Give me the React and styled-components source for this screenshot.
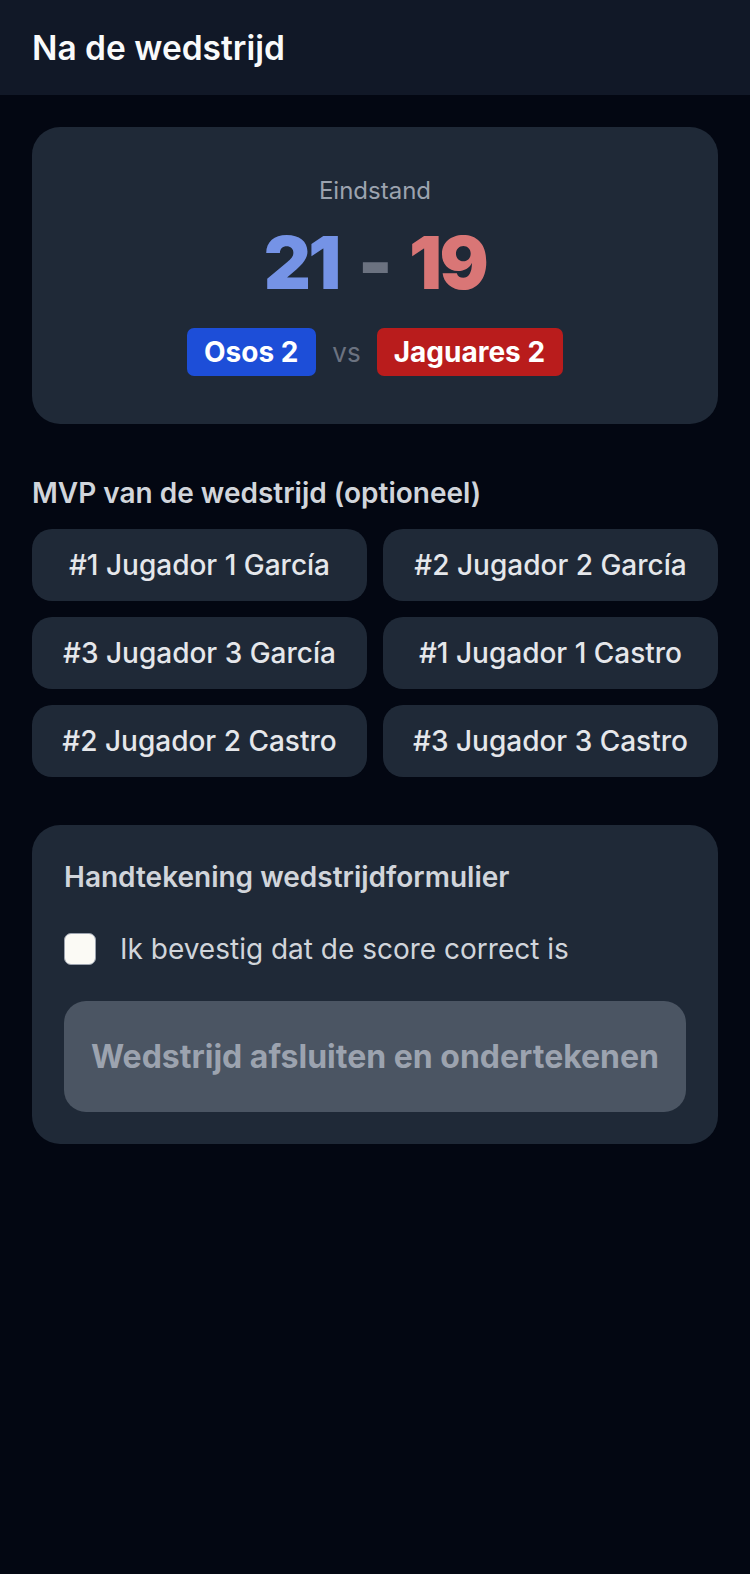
import styled, { createGlobalStyle } from "styled-components";

const GlobalStyle = createGlobalStyle`
  html, body {
    margin: 0;
    padding: 0;
    background: #030712;
    font-family: Inter, "Noto Sans", sans-serif;
    color: #f9fafb;
  }
  * { box-sizing: border-box; }
`;

const Page = styled.div`
  min-height: 1574px;
  background: #030712;
`;

const Header = styled.header`
  height: 95px;
  background: #111827;
  display: flex;
  align-items: center;
  padding: 0 32px;
`;

const Title = styled.h1`
  margin: 0;
  font-size: 33.5px;
  font-weight: 600;
  color: #f9fafb;
`;

const Main = styled.main`
  padding: 32px;
  display: flex;
  flex-direction: column;
`;

const Card = styled.section`
  background: #1f2937;
  border-radius: 28px;
  padding: ${(p) => p.$pad || "32px"};
  display: flex;
  flex-direction: column;
  align-items: ${(p) => (p.$center ? "center" : "stretch")};
`;

const Caption = styled.div`
  font-size: 24px;
  line-height: 32px;
  color: #9ca3af;
`;

const Score = styled.div`
  display: flex;
  align-items: center;
  gap: 19px;
  font-size: 73px;
  font-weight: 900;
  line-height: 72px;
  margin-top: 20px;
  letter-spacing: -2.5px;
`;

const Num = styled.span`
  color: ${(p) => p.$color};
`;

const Dash = styled.span`
  color: #6b7280;
`;

const Teams = styled.div`
  display: flex;
  align-items: center;
  gap: 16px;
  margin-top: 29px;
`;

const Badge = styled.span`
  background: ${(p) => p.$bg};
  color: #fff;
  font-size: 28px;
  font-weight: 700;
  border-radius: 7px;
  height: 48px;
  padding: 0 18px 0 17px;
  display: flex;
  align-items: center;
`;

const Vs = styled.span`
  color: #6b7280;
  font-size: 26px;
`;

const SectionLabel = styled.h2`
  margin: 49px 0 16px;
  font-size: 28px;
  line-height: 40px;
  font-weight: 600;
  color: #d1d5db;
`;

const Grid = styled.div`
  display: grid;
  grid-template-columns: 1fr 1fr;
  gap: 16px 16px;
`;

const PlayerButton = styled.button`
  height: 72px;
  border: none;
  border-radius: 20px;
  background: #1f2937;
  color: #e5e7eb;
  font-family: inherit;
  font-size: 28px;
  font-weight: 500;
  cursor: pointer;
`;

const SignCard = styled(Card)`
  margin-top: 48px;
`;

const SignTitle = styled.h3`
  margin: 0;
  font-size: 28px;
  line-height: 40px;
  font-weight: 600;
  color: #d1d5db;
`;

const CheckRow = styled.label`
  display: flex;
  align-items: center;
  gap: 24px;
  margin-top: 32px;
  height: 40px;
  font-size: 28px;
  color: #d1d5db;
`;

const Box = styled.span`
  width: 32px;
  height: 32px;
  border-radius: 7px;
  background: #fbfaf5;
  border: 1px solid #9ca3af;
  flex-shrink: 0;
`;

const SubmitButton = styled.button`
  margin-top: 32px;
  height: 111px;
  border: none;
  border-radius: 22px;
  background: #4b5563;
  color: #9ca3af;
  font-family: inherit;
  font-size: 32px;
  font-weight: 700;
`;

const players = [
  "#1 Jugador 1 García",
  "#2 Jugador 2 García",
  "#3 Jugador 3 García",
  "#1 Jugador 1 Castro",
  "#2 Jugador 2 Castro",
  "#3 Jugador 3 Castro",
];

export default function App() {
  return (
    <>
      <GlobalStyle />
      <Page>
        <Header>
          <Title>Na de wedstrijd</Title>
        </Header>
        <Main>
          <Card $center $pad="48px 32px 48px">
            <Caption>Eindstand</Caption>
            <Score>
              <Num $color="#7593e6">21</Num>
              <Dash>-</Dash>
              <Num $color="#d97676">19</Num>
            </Score>
            <Teams>
              <Badge $bg="#1d4ed8">Osos 2</Badge>
              <Vs>vs</Vs>
              <Badge $bg="#b91c1c">Jaguares 2</Badge>
            </Teams>
          </Card>

          <SectionLabel>MVP van de wedstrijd (optioneel)</SectionLabel>
          <Grid>
            {players.map((p) => (
              <PlayerButton key={p}>{p}</PlayerButton>
            ))}
          </Grid>

          <SignCard>
            <SignTitle>Handtekening wedstrijdformulier</SignTitle>
            <CheckRow>
              <Box />
              Ik bevestig dat de score correct is
            </CheckRow>
            <SubmitButton disabled>Wedstrijd afsluiten en ondertekenen</SubmitButton>
          </SignCard>
        </Main>
      </Page>
    </>
  );
}
